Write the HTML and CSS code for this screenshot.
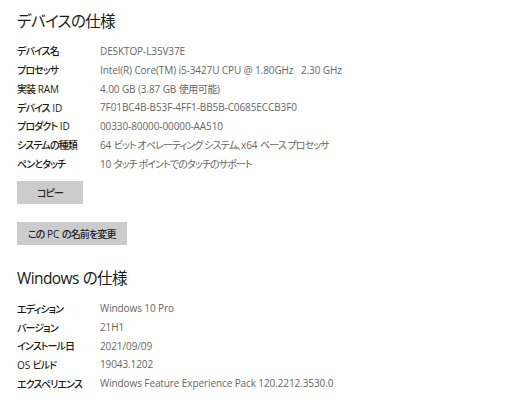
FILE: index.html
```html
<!DOCTYPE html>
<html lang="ja">
<head>
<meta charset="utf-8">
<link rel="stylesheet" href="styles.css">
</head>
<body>
<div class="page">
  <h2 class="heading"><span class="jp">デバイスの仕様</span></h2>
  <dl class="specs">
    <dt><span class="jp">デバイス名</span></dt><dd>DESKTOP-L35V37E</dd>
    <dt><span class="jp">プロセッサ</span></dt><dd>Intel(R) Core(TM) i5-3427U CPU @ 1.80GHz&nbsp;&nbsp;&nbsp;2.30 GHz</dd>
    <dt><span class="jp">実装</span> RAM</dt><dd>4.00 GB (3.87 GB <span class="kj">使用可能</span>)</dd>
    <dt><span class="jp">デバイス</span> ID</dt><dd>7F01BC4B-B53F-4FF1-BB5B-C0685ECCB3F0</dd>
    <dt><span class="jp">プロダクト</span> ID</dt><dd>00330-80000-00000-AA510</dd>
    <dt><span class="jp">システムの種類</span></dt><dd>64 <span class="jp">ビット オペレーティング システム、</span>x64 <span class="jp">ベース プロセッサ</span></dd>
    <dt><span class="jp">ペンとタッチ</span></dt><dd>10 <span class="jp">タッチ ポイントでのタッチのサポート</span></dd>
  </dl>
  <div class="buttons">
    <button class="btn btn-copy"><span class="jp">コピー</span></button>
    <button class="btn btn-rename"><span class="jp">この</span> PC <span class="jp">の名前を変更</span></button>
  </div>
  <h2 class="heading heading-win"><span class="latin">Windows</span> <span class="jp">の仕様</span></h2>
  <dl class="specs">
    <dt><span class="jp">エディション</span></dt><dd>Windows 10 Pro</dd>
    <dt><span class="jp">バージョン</span></dt><dd>21H1</dd>
    <dt><span class="jp">インストール日</span></dt><dd>2021/09/09</dd>
    <dt>OS <span class="jp">ビルド</span></dt><dd>19043.1202</dd>
    <dt><span class="jp">エクスペリエンス</span></dt><dd>Windows Feature Experience Pack 120.2212.3530.0</dd>
  </dl>
</div>
</body>
</html>
```
FILE: styles.css
```css
html, body {
  margin: 0;
  padding: 0;
  background: #ffffff;
}
body {
  font-family: "Open Sans", "Noto Sans CJK JP", sans-serif;
  font-feature-settings: "palt";
  color: #222;
}
.page {
  padding: 11px 0 0 17px;
}
.heading {
  margin: 0;
  font-size: 15.5px;
  line-height: 20px;
  font-weight: 400;
  color: #1a1a1a;
}
.heading .jp {
  letter-spacing: -0.6px;
}
.heading .latin {
  letter-spacing: -0.6px;
}
.heading-win {
  margin-top: 23px;
}
.specs {
  margin: 10.6px 0 0 0;
  display: grid;
  grid-template-columns: 83px auto;
  grid-auto-rows: 18.7px;
  align-items: center;
  font-size: 10px;
  letter-spacing: -0.1px;
}
.specs dt {
  color: #1a1a1a;
  font-weight: 500;
}
.specs dd {
  margin: 0;
  color: #666;
  white-space: nowrap;
}
.jp {
  letter-spacing: -0.9px;
}
.kj {
  letter-spacing: -0.4px;
}
.buttons {
  display: flex;
  flex-direction: column;
  align-items: flex-start;
  gap: 18px;
  margin-top: 9px;
}
.btn {
  font-family: inherit;
  font-feature-settings: "palt";
  font-size: 10px;
  font-weight: 500;
  color: #222;
  background: #cccccc;
  border: none;
  height: 23px;
  padding: 0 11px;
  margin: 0;
}
.btn-copy {
  width: 66px;
}
```
